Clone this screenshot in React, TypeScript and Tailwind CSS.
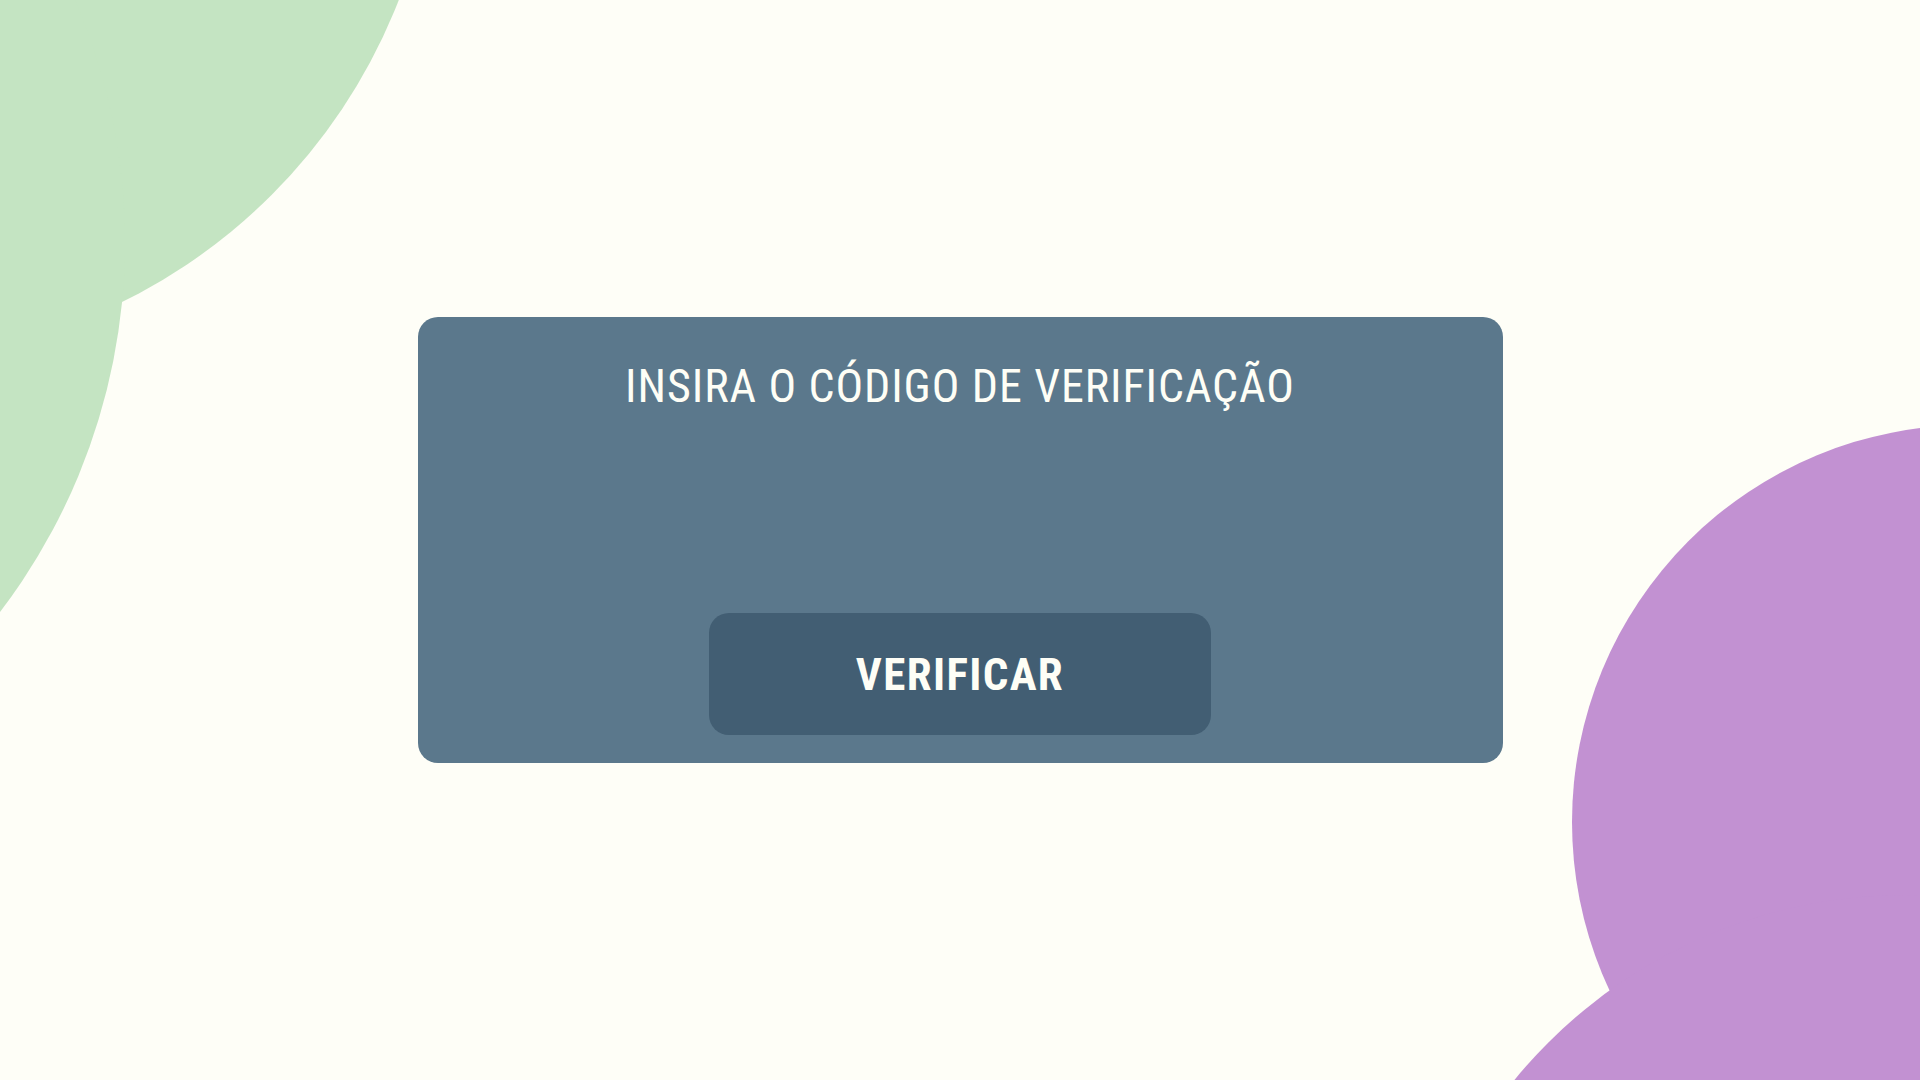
import React from 'react';

const FONT = "'Liberation Sans Narrow', 'Roboto Condensed', 'DejaVu Sans Condensed', Roboto, sans-serif";

// background blobs, drawn as overlapping circles
function Blobs() {
  return (
    <svg className="absolute inset-0 w-full h-full" viewBox="0 0 1920 1080" preserveAspectRatio="none">
      <circle cx={-127} cy={-204} r={564} fill="#C4E4C2" />
      <circle cx={-485} cy={242} r={610} fill="#C4E4C2" />
      <circle cx={1969} cy={822} r={397} fill="#C291D2" />
      <circle cx={1905} cy={1400} r={505} fill="#C291D2" />
    </svg>
  );
}

export default function App() {
  return (
    <div className="relative w-full h-screen overflow-hidden bg-[#FEFEF7]" style={{ fontFamily: FONT }}>
      <Blobs />
      <div className="relative z-10 flex items-center justify-center w-full h-full">
        <div className="flex flex-col items-center w-[1085px] h-[446px] rounded-[20px] bg-[#5B788C] pt-[46px] pb-[28px]">
          <h1 className="text-[46px] leading-none font-normal tracking-[0.02em] text-[#FEFEF6]">
            INSIRA O CÓDIGO DE VERIFICAÇÃO
          </h1>
          <div className="flex-1" />
          <button className="w-[502px] h-[122px] rounded-[20px] bg-[#425E73] text-[#FEFEF6] text-[45px] font-bold leading-none tracking-[0.03em]">
            VERIFICAR
          </button>
        </div>
      </div>
    </div>
  );
}
